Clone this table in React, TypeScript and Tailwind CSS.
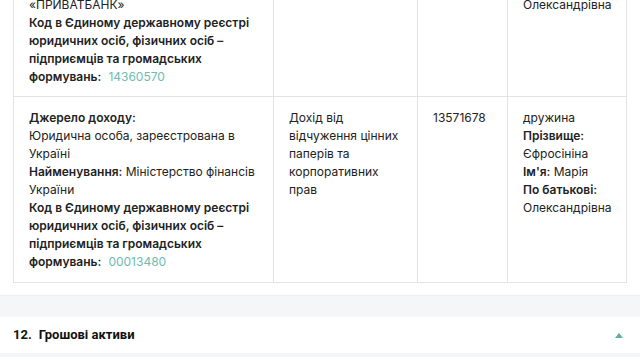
const Label = ({ children }: { children: React.ReactNode }) => (
  <span className="font-semibold">{children}</span>
);

const Code = ({ value }: { value: string }) => (
  <>
    <Label>
      Код в Єдиному державному реєстрі юридичних осіб, фізичних осіб – підприємців та громадських
      формувань:
    </Label>
    <span className="text-[#6dbcb1] ml-[7px]">{value}</span>
  </>
);

const cell = 'border-r border-b border-[#e3e3e3] px-[15px]';

const App = () => {
  return (
    <div
      className="w-[640px] h-[360px] overflow-hidden bg-white text-[12px] leading-[18px] text-[#222]"
      style={{ fontFamily: 'Inter, "Noto Sans", sans-serif' }}>
      <div className="pl-[13px] pr-[14px] -mt-[4px]">
        <div className="grid grid-cols-[260px_144px_90px_119px] border-l border-[#e3e3e3]">
          <div className={`${cell} pb-[10px]`}>
            <p>«ПРИВАТБАНК»</p>
            <p>
              <Code value="14360570" />
            </p>
          </div>
          <div className={cell} />
          <div className={cell} />
          <div className={cell}>
            <p>Олександрівна</p>
          </div>

          <div className={`${cell} pt-[12px] pb-[11px]`}>
            <p>
              <Label>Джерело доходу:</Label>
            </p>
            <p>Юридична особа, зареєстрована в Україні</p>
            <p>
              <Label>Найменування:</Label> Міністерство фінансів України
            </p>
            <p>
              <Code value="00013480" />
            </p>
          </div>
          <div className={`${cell} pt-[12px]`}>
            <p>Дохід від відчуження цінних паперів та корпоративних прав</p>
          </div>
          <div className={`${cell} pt-[12px]`}>
            <p>13571678</p>
          </div>
          <div className={`${cell} pt-[12px]`}>
            <p>дружина</p>
            <p>
              <Label>Прізвище:</Label>
            </p>
            <p>Єфросініна</p>
            <p>
              <Label>Ім'я:</Label> Марія
            </p>
            <p>
              <Label>По батькові:</Label>
            </p>
            <p>Олександрівна</p>
          </div>
        </div>
      </div>

      <div className="h-[12px]" />
      <div className="h-[22px] bg-[#f4f6f7] border-t border-[#eceeef]" />

      <div
        className="h-[40px] flex items-center justify-between pl-[13px] pr-[17px] border-b-4 border-[#f4f6f7] text-[#111]"
        style={{ fontFamily: 'Roboto, "Noto Sans", sans-serif' }}>
        <div className="flex items-center gap-[7px] font-bold text-[13px]">
          <span>12.</span>
          <span>Грошові активи</span>
        </div>
        <div className="w-0 h-0 border-l-[4px] border-r-[4px] border-b-[5px] border-l-transparent border-r-transparent border-b-[#5fae9f]" />
      </div>
    </div>
  );
};

export default App;
